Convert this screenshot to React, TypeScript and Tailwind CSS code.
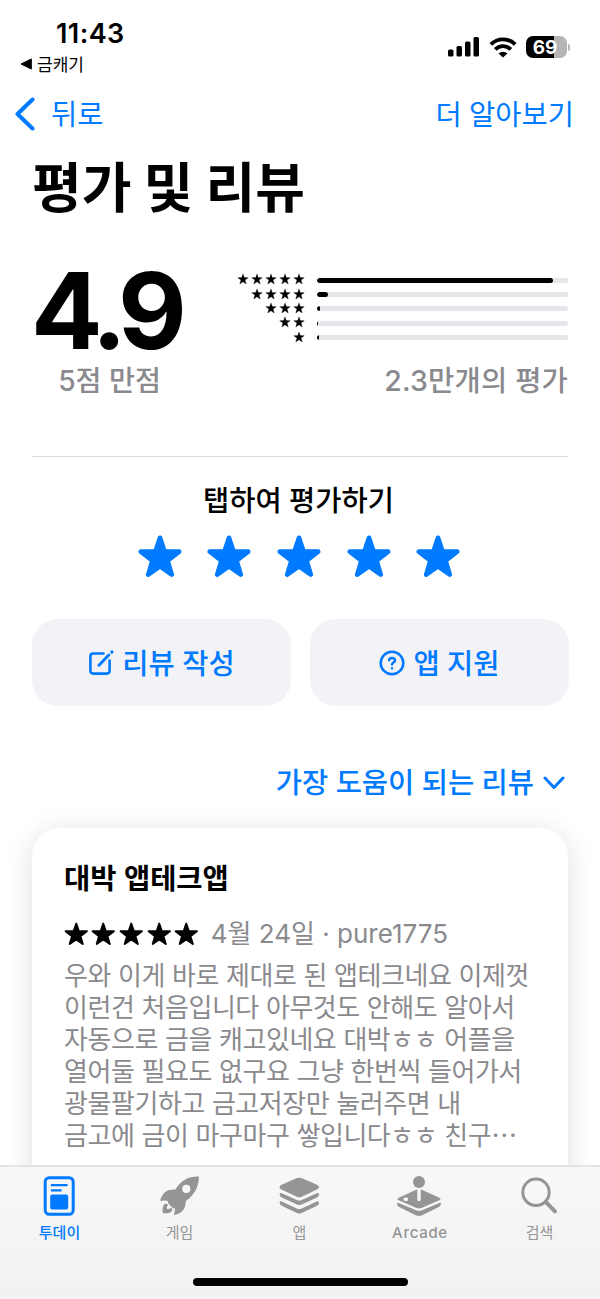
import React, { useState } from "react";

type Tab = "today" | "games" | "apps" | "arcade" | "search";

const KR = "font-['Noto_Sans_CJK_KR',sans-serif]";
const MIXED = "font-['Inter','Noto_Sans_CJK_KR',sans-serif]";

const ratings = [
  { stars: 5, value: 94 },
  { stars: 4, value: 4.2 },
  { stars: 3, value: 1.1 },
  { stars: 2, value: 0.3 },
  { stars: 1, value: 0.7 },
];

const reviewText = [
  "우와 이게 바로 제대로 된 앱테크네요 이제껏",
  "이런건 처음입니다 아무것도 안해도 알아서",
  "자동으로 금을 캐고있네요 대박ㅎㅎ 어플을",
  "열어둘 필요도 없구요 그냥 한번씩 들어가서",
  "광물팔기하고 금고저장만 눌러주면 내",
  "금고에 금이 마구마구 쌓입니다ㅎㅎ 친구⋯",
].join("\n");

function Star({ className, stroke = 3.6 }: { className: string; stroke?: number }) {
  return (
    <svg viewBox="0 0 44 43" className={className} fill="currentColor">
      <path
        d="M22 2.8 L26.6 16.4 L41.2 16.6 L29.6 25.6 L33.8 39.6 L22 31.4 L10.2 39.6 L14.4 25.6 L2.8 16.6 L17.4 16.4 Z"
        stroke="currentColor"
        strokeWidth={stroke}
        strokeLinejoin="round"
      />
    </svg>
  );
}

function StatusIcons() {
  return (
    <div className="flex items-center">
      <svg width="32" height="20" viewBox="0 0 32 20">
        <rect x="0" y="12.5" width="5.5" height="7" rx="1.6" />
        <rect x="8.5" y="9" width="5.5" height="10.5" rx="1.6" />
        <rect x="17" y="4.5" width="5.5" height="15" rx="1.6" />
        <rect x="25.5" y="0" width="5.5" height="19.5" rx="1.6" />
      </svg>
      <svg className="ml-[9px]" width="28" height="21" viewBox="0 0 28 21" fill="none" stroke="#000" strokeWidth="3.8">
        <path d="M1.8 7.4a17.3 17.3 0 0 1 24.4 0" />
        <path d="M6.2 12.4a11 11 0 0 1 15.6 0" />
        <path d="M9.6 16.4a6.4 6.4 0 0 1 8.8 0L14 20.6Z" fill="#000" stroke="none" />
      </svg>
      <div className="ml-[9px] flex h-[22px] w-[41px] items-center justify-center rounded-[7px] bg-[linear-gradient(to_right,#000_69%,#b5b5b5_69%)] pr-[2px] font-['Inter',sans-serif] text-[19px] leading-none font-bold text-white">
        69
      </div>
      <div className="ml-[1.5px] h-[7px] w-[2px] rounded-r-full bg-[#b5b5b5]" />
    </div>
  );
}

function TodayIcon() {
  return (
    <svg width="44" height="44" viewBox="0 0 44 44">
      <rect x="7.2" y="3.7" width="28" height="36.6" rx="4" fill="none" stroke="currentColor" strokeWidth="3" />
      <path d="M13.8 11.2h15M13.8 16.4h9" stroke="currentColor" strokeWidth="2.2" strokeLinecap="round" />
      <rect x="12.2" y="20.6" width="18" height="15" rx="2" fill="currentColor" />
    </svg>
  );
}

function RocketIcon() {
  return (
    <svg width="44" height="44" viewBox="0 0 44 44" fill="currentColor">
      <path
        fillRule="evenodd"
        d="M40.2 2.6C31 2.4 23.5 5.8 17.3 15.5C9 15.2 5.1 18.3 2.4 25.6C2.1 26.7 2.7 27.2 3.7 27C6.5 26.4 8.2 26.5 10.2 27.4C10 28.4 10 29 10.6 29.7L14.8 33.9C15.4 34.4 15.9 34.5 16.8 34.3C17.2 36 16.8 37.4 16 39.4C15.7 40.4 16.2 41 17.2 40.8C24.2 39.1 27.7 35.2 27.8 27.1C36.5 20.5 40.6 13 40.9 3.4C40.9 2.9 40.7 2.6 40.2 2.6ZM28.3 10.8a4.1 4.1 0 1 1 0 8.2a4.1 4.1 0 0 1 0-8.2Z"
      />
      <path d="M8.4 29.5C5.5 30 4.3 32.8 4.7 38.2C4.8 38.8 5.2 39.3 5.8 39.3C11.3 39.6 14 38.2 14.6 35.6L12.6 33.6C12.1 34.8 10.8 35.3 9 35C8.7 33.3 8.9 32.2 10.2 31.2Z" />
    </svg>
  );
}

function AppsIcon() {
  return (
    <svg width="44" height="44" viewBox="0 0 44 44" fill="currentColor">
      <path d="M19 4.1q2.2-.9 4.4 0L39 10.8q1.9.9 1.9 2.4t-1.9 2.4L23.7 22.7q-2.4 1-4.8 0L3.5 15.6q-1.9-.9-1.9-2.4t1.9-2.4Z" />
      <path d="M1.6 20.4q.2-2 2.2-1.2l15.1 6.8q2.4 1 4.8 0l15.1-6.8q2-.8 2.2 1.2q0 2-2 3L23.7 30.5q-2.4 1.1-4.8 0L3.6 23.4q-2-1-2-3Z" />
      <path d="M1.6 28.8q.2-2 2.2-1.2l15.1 6.8q2.4 1 4.8 0l15.1-6.8q2-.8 2.2 1.2q0 2-2 3L23.7 38.9q-2.4 1.1-4.8 0L3.6 31.8q-2-1-2-3Z" />
    </svg>
  );
}

function ArcadeIcon() {
  return (
    <svg width="44" height="44" viewBox="0 0 44 44" fill="currentColor" overflow="visible">
      <circle cx="21" cy="8" r="6" />
      <path
        fillRule="evenodd"
        d="M19.3 15.6Q18 15.8 17 16.2L.7 23.7q-2.4 1.3 0 2.6L18 33.7q3 1.2 6 0L41.3 26.3q2.4-1.3 0-2.6L25 16.2Q24 15.8 22.7 15.6V25.6a1.7 1.7 0 0 1-3.4 0ZM7.2 23.5h1.2a1.8 1.8 0 0 1 0 3.6H7.2a1.8 1.8 0 0 1 0-3.6Z"
      />
      <path d="M-.9 29.7q.1-1.3 1.6-.7l17.3 7.2q3 1.2 6 0l17.3-7.2q1.5-.6 1.6.7q.1 2.2-1.6 3L24.1 41.2q-3.1 1.4-6.2 0L.7 32.7q-1.7-.8-1.6-3Z" />
    </svg>
  );
}

function SearchIcon() {
  return (
    <svg width="44" height="44" viewBox="0 0 44 44" fill="none" stroke="currentColor" strokeLinecap="round">
      <circle cx="18" cy="18.3" r="13.2" strokeWidth="3" />
      <path d="M27.9 28.2 37 37.3" strokeWidth="4" />
    </svg>
  );
}

const tabs: { id: Tab; label: string; icon: React.ReactNode }[] = [
  { id: "today", label: "투데이", icon: <TodayIcon /> },
  { id: "games", label: "게임", icon: <RocketIcon /> },
  { id: "apps", label: "앱", icon: <AppsIcon /> },
  { id: "arcade", label: "Arcade", icon: <ArcadeIcon /> },
  { id: "search", label: "검색", icon: <SearchIcon /> },
];

export default function App() {
  const [tab, setTab] = useState<Tab>("today");

  return (
    <div className={`flex h-[1299px] w-[600px] flex-col overflow-hidden bg-white whitespace-nowrap text-black ${KR}`}>
      <header className="h-[145px] shrink-0">
        <div className="flex h-[77px] justify-between pr-[30px] pl-5">
          <div className="pt-[18px]">
            <div className="pl-[36px] font-['Inter',sans-serif] text-[27px] leading-[32px] font-semibold tracking-[0.4px]">11:43</div>
            <div className="mt-px flex h-[26px] items-center text-[17px] leading-[26px]">
              <svg className="mr-[5px]" width="12" height="12" viewBox="0 0 12 12">
                <path d="M1 6 11.3 1v10Z" stroke="#000" strokeLinejoin="round" />
              </svg>
              금캐기
            </div>
          </div>
          <div className="pt-[36px]">
            <StatusIcons />
          </div>
        </div>
        <nav className="flex h-[73px] items-center justify-between pr-[26px] pl-[15px] text-[28.5px] text-[#007aff]">
          <button className="flex items-center">
            <svg width="20" height="34" viewBox="0 0 20 34" fill="none" stroke="currentColor" strokeWidth="4" strokeLinecap="round" strokeLinejoin="round">
              <path d="M17.5 2.5 2.5 17l15 14.5" />
            </svg>
            <span className="ml-4">뒤로</span>
          </button>
          <button className="[word-spacing:1px]">더 알아보기</button>
        </nav>
      </header>

      <main className="min-h-0 flex-1 overflow-hidden px-8">
        <h1 className="h-[80px] text-[54px] leading-[80px] font-bold">평가 및 리뷰</h1>

        <section className="flex h-[232px] justify-between border-b border-[#dcdcdd]">
          <div className="w-[155px] pt-[33px]">
            <div className="-ml-px font-['Inter',sans-serif] text-[106px] leading-[106px] font-bold tracking-[-7.6px]">4.9</div>
            <div className={`-mt-px h-[36px] text-center text-[28.2px] leading-[36px] font-medium text-[#8a8a8e] ${MIXED}`}>5점 만점</div>
          </div>
          <div className="pt-[47px]">
            {ratings.map((row) => (
              <div key={row.stars} className="flex h-[14.4px] items-center justify-end">
                <div className="flex gap-[2px]">
                  {Array.from({ length: row.stars }, (_, i) => (
                    <Star key={i} className="h-3 w-3" stroke={1.2} />
                  ))}
                </div>
                <div className="mt-[2px] ml-3 h-[5px] w-[251px] overflow-hidden rounded-full bg-[#e5e5ea]">
                  <div className="h-full rounded-full bg-black" style={{ width: `${row.value}%` }} />
                </div>
              </div>
            ))}
            <div className={`mt-[19px] text-right text-[28.5px] leading-[36px] font-medium tracking-[0.2px] text-[#8a8a8e] ${MIXED}`}>2.3만개의 평가</div>
          </div>
        </section>

        <section className="h-[162px] pt-[22px]">
          <h2 className="-ml-[3px] text-center text-[28.5px] leading-[40px] font-medium [word-spacing:1px]">탭하여 평가하기</h2>
          <div className="mt-[15.5px] -ml-[2px] flex justify-center gap-[25.7px] text-[#007aff]">
            {[1, 2, 3, 4, 5].map((n) => (
              <Star key={n} className="h-[43px] w-[44px]" stroke={4.6} />
            ))}
          </div>
        </section>

        <div className="-mr-px flex h-[87px] gap-[19px] text-[28.5px] font-medium text-[#007aff]">
          <button className="flex flex-1 items-center justify-center rounded-[26px] bg-[#f2f2f7] [word-spacing:1px]">
            <svg className="mr-[8px]" width="26" height="26" viewBox="0 0 26 26" fill="none" stroke="currentColor" strokeWidth="2.6" strokeLinecap="round">
              <path d="M15.5 3.5H5.2Q2.4 3.5 2.4 6.3V20.8Q2.4 23.6 5.2 23.6H18.8Q21.6 23.6 21.6 20.8V10.5" />
              <path d="M11 15.3 20.8 5M23.8 2.1 24 1.9" strokeWidth="2.9" />
            </svg>
            리뷰 작성
          </button>
          <button className="flex flex-1 items-center justify-center rounded-[26px] bg-[#f2f2f7] [word-spacing:1px]">
            <svg className="mr-[8px]" width="26" height="26" viewBox="0 0 26 26" fill="none" stroke="currentColor" strokeWidth="2.5" strokeLinecap="round" strokeLinejoin="round">
              <circle cx="13" cy="13" r="11.3" />
              <path d="M10.1 10.2C10.4 8.5 11.4 7.9 13 7.9C14.8 7.9 16 8.8 16 10.4C16 12.5 13 12.5 13 14.6M13 18.2v.1" />
            </svg>
            앱 지원
          </button>
        </div>

        <div className="flex h-[122px] items-center justify-end pt-[28px] pr-[3px] text-[28.5px] font-medium text-[#007aff] [word-spacing:1px]">
          가장 도움이 되는 리뷰
          <svg className="mt-1 ml-[9px]" width="22" height="14" viewBox="0 0 22 14" fill="none" stroke="currentColor" strokeWidth="3" strokeLinecap="round" strokeLinejoin="round">
            <path d="M2 2 11 11.5 20 2" />
          </svg>
        </div>

        <article className="h-[400px] rounded-[28px] bg-white px-8 pt-[29px] shadow-[0_4px_28px_rgba(0,0,0,0.13)]">
          <h3 className="text-[28.5px] leading-[40px] font-bold [word-spacing:1px]">대박 앱테크앱</h3>
          <div className="mt-[19px] flex h-[36px] items-center">
            <div className="-ml-[0.5px] flex gap-[3.2px]">
              {[1, 2, 3, 4, 5].map((n) => (
                <Star key={n} className="h-6 w-[24.5px]" stroke={3.4} />
              ))}
            </div>
            <span className={`ml-[12px] text-[26px] leading-[36px] text-[#8a8a8e] ${MIXED}`}>4월 24일 · pure1775</span>
          </div>
          <p className="mt-[6px] text-[26px] leading-[32px] tracking-[-0.45px] whitespace-pre text-[#8a8a8e] [word-spacing:1.7px]">
            {reviewText}
          </p>
        </article>
      </main>

      <footer className="relative z-10 flex h-[134px] shrink-0 flex-col items-center border-t-2 border-[#e3e3e3] bg-linear-to-b from-[#f8f8f8] to-[#f1f1f1]">
        <div className="grid w-full grid-cols-5 pt-[7px]">
          {tabs.map((t) => (
            <button
              key={t.id}
              onClick={() => setTab(t.id)}
              className={`flex flex-col items-center text-[15px] leading-[28px] ${MIXED} ${
                tab === t.id ? "font-medium text-[#007aff]" : "text-[#959595]"
              }`}
            >
              {t.icon}
              <span className={t.id === "arcade" ? "mt-px font-medium tracking-[0.7px]" : "mt-px mr-px"}>{t.label}</span>
            </button>
          ))}
        </div>
        <div className="mt-[31px] h-2 w-[215px] rounded-full bg-black" />
      </footer>
    </div>
  );
}
